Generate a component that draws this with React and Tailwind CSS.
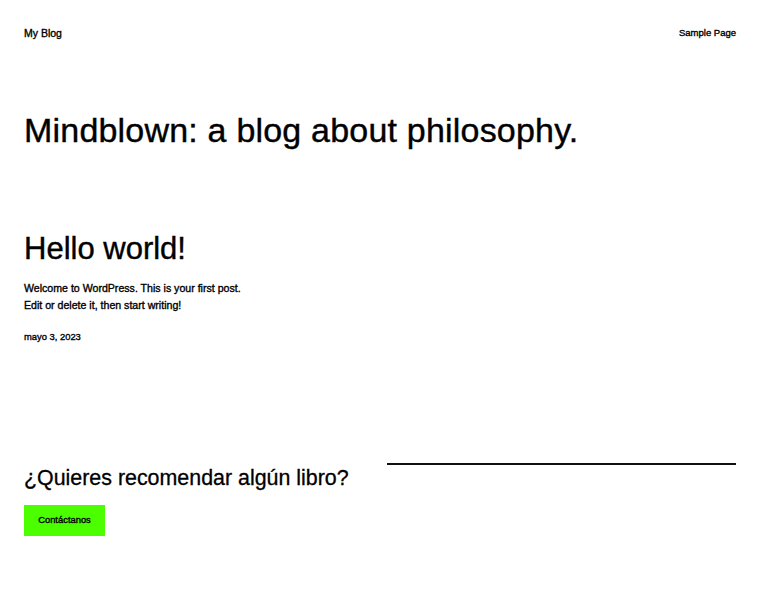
import React from "react";

const App = () => {
  return (
    <div className="min-h-[600px] bg-white text-black px-6 font-['Liberation_Sans',Arial,sans-serif] [-webkit-text-stroke:0.35px_#000]">
      {/* Header */}
      <header className="flex justify-between items-start pt-[26px]">
        <a className="text-[10.5px] leading-[14px]">My Blog</a>
        <nav className="text-[9.5px] leading-[14px]">
          <a>Sample Page</a>
        </nav>
      </header>

      {/* Site tagline */}
      <h1 className="mt-[70px] text-[34px] leading-[1.2] tracking-[0.2px] [-webkit-text-stroke:0.4px_#000]">
        Mindblown: a blog about philosophy.
      </h1>

      {/* Post */}
      <article className="mt-[79px]">
        <h2 className="text-[31px] leading-[1.2] [-webkit-text-stroke:0.4px_#000]">Hello world!</h2>
        <p className="mt-[13px] text-[10.6px] leading-[17px]">
          Welcome to WordPress. This is your first post.
          <br />
          Edit or delete it, then start writing!
        </p>
        <div className="mt-[16px] text-[9.4px] leading-[14px]">mayo 3, 2023</div>
      </article>

      {/* Call to action */}
      <section className="mt-[119px] grid grid-cols-2 gap-[14px]">
        <div className="pt-[3px]">
          <h2 className="text-[21.4px] leading-[1.2] [-webkit-text-stroke:0.3px_#000]">¿Quieres recomendar algún libro?</h2>
          <button className="mt-[13px] w-[81px] h-[31px] bg-[#4cff00] text-[9.4px] flex items-center justify-center">
            Contáctanos
          </button>
        </div>
        <div>
          <div className="h-[2px] bg-[#111]" />
        </div>
      </section>
    </div>
  );
};

export default App;
